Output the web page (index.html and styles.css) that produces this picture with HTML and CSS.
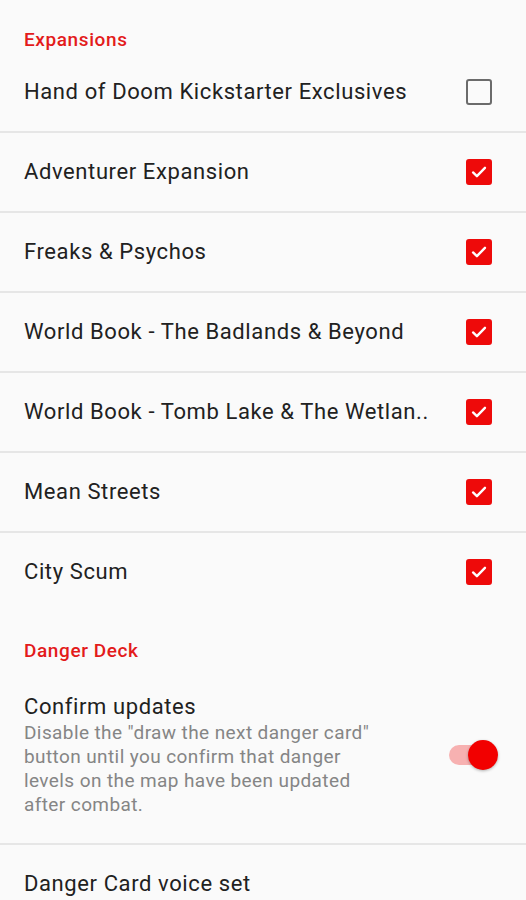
FILE: index.html
```html
<!DOCTYPE html>
<html lang="en">
<head>
    <meta charset="UTF-8">
    <meta name="viewport" content="width=device-width, initial-scale=1.0">
    <title>Settings</title>
    <link rel="stylesheet" href="styles.css">
</head>
<body>
    <div class="settings">
        <h2 class="category">Expansions</h2>
        <div class="pref">
            <span class="pref-title">Hand of Doom Kickstarter Exclusives</span>
            <span class="checkbox"></span>
        </div>
        <div class="pref">
            <span class="pref-title">Adventurer Expansion</span>
            <span class="checkbox checked"><svg viewBox="0 0 24 24"><path d="M5.5 12.5l4.2 4 8.8-9"/></svg></span>
        </div>
        <div class="pref">
            <span class="pref-title">Freaks &amp; Psychos</span>
            <span class="checkbox checked"><svg viewBox="0 0 24 24"><path d="M5.5 12.5l4.2 4 8.8-9"/></svg></span>
        </div>
        <div class="pref">
            <span class="pref-title">World Book - The Badlands &amp; Beyond</span>
            <span class="checkbox checked"><svg viewBox="0 0 24 24"><path d="M5.5 12.5l4.2 4 8.8-9"/></svg></span>
        </div>
        <div class="pref">
            <span class="pref-title">World Book - Tomb Lake &amp; The Wetlan..</span>
            <span class="checkbox checked"><svg viewBox="0 0 24 24"><path d="M5.5 12.5l4.2 4 8.8-9"/></svg></span>
        </div>
        <div class="pref">
            <span class="pref-title">Mean Streets</span>
            <span class="checkbox checked"><svg viewBox="0 0 24 24"><path d="M5.5 12.5l4.2 4 8.8-9"/></svg></span>
        </div>
        <div class="pref last">
            <span class="pref-title">City Scum</span>
            <span class="checkbox checked"><svg viewBox="0 0 24 24"><path d="M5.5 12.5l4.2 4 8.8-9"/></svg></span>
        </div>

        <h2 class="category">Danger Deck</h2>
        <div class="pref tall">
            <div class="pref-text">
                <span class="pref-title">Confirm updates</span>
                <p class="pref-summary">Disable the "draw the next danger card" button until you confirm that danger levels on the map have been updated after combat.</p>
            </div>
            <span class="switch on"><span class="track"></span><span class="thumb"></span></span>
        </div>
        <div class="pref">
            <span class="pref-title">Danger Card voice set</span>
        </div>
    </div>
</body>
</html>
```

FILE: styles.css
```css
body {
    margin: 0;
    background: #fafafa;
    font-family: Roboto, 'Noto Sans', sans-serif;
    color: #212121;
}
.settings {
    display: flex;
    flex-direction: column;
}
.category {
    margin: 0;
    padding: 30px 24px 3px;
    font-size: 19px;
    line-height: 20px;
    font-weight: 500;
    letter-spacing: 0.6px;
    color: #e31b1b;
}
.pref {
    display: flex;
    align-items: center;
    justify-content: space-between;
    height: 78px;
    padding: 0 34px 0 24px;
    border-bottom: 2px solid #e6e6e6;
}
.pref.last {
    border-bottom: none;
}
.pref.tall {
    height: auto;
    padding: 29px 28px 26px 24px;
}
.pref-title {
    font-size: 22px;
    line-height: 28px;
    letter-spacing: 0.6px;
    white-space: nowrap;
}
.pref-text {
    display: flex;
    flex-direction: column;
}
.pref-summary {
    margin: 0;
    width: 370px;
    font-size: 19px;
    line-height: 24px;
    letter-spacing: 0.4px;
    color: #858585;
}
.checkbox {
    box-sizing: border-box;
    width: 26px;
    height: 26px;
    border: 2.5px solid #6b6b6b;
    border-radius: 3px;
    display: flex;
    align-items: center;
    justify-content: center;
}
.checkbox.checked {
    background: #ee0a0a;
    border-color: #ee0a0a;
}
.checkbox svg {
    width: 22px;
    height: 22px;
    fill: none;
    stroke: #fff;
    stroke-width: 2.6;
    stroke-linecap: round;
    stroke-linejoin: round;
}
.switch {
    position: relative;
    width: 49px;
    height: 30px;
    flex-shrink: 0;
}
.switch .track {
    position: absolute;
    left: 0;
    top: 5px;
    width: 44px;
    height: 20px;
    border-radius: 10px;
    background: #f7b1b1;
}
.switch .thumb {
    position: absolute;
    right: 0;
    top: 0;
    width: 30px;
    height: 30px;
    border-radius: 50%;
    background: #f20000;
    box-shadow: 0 1px 3px rgba(0, 0, 0, 0.3);
}
```
